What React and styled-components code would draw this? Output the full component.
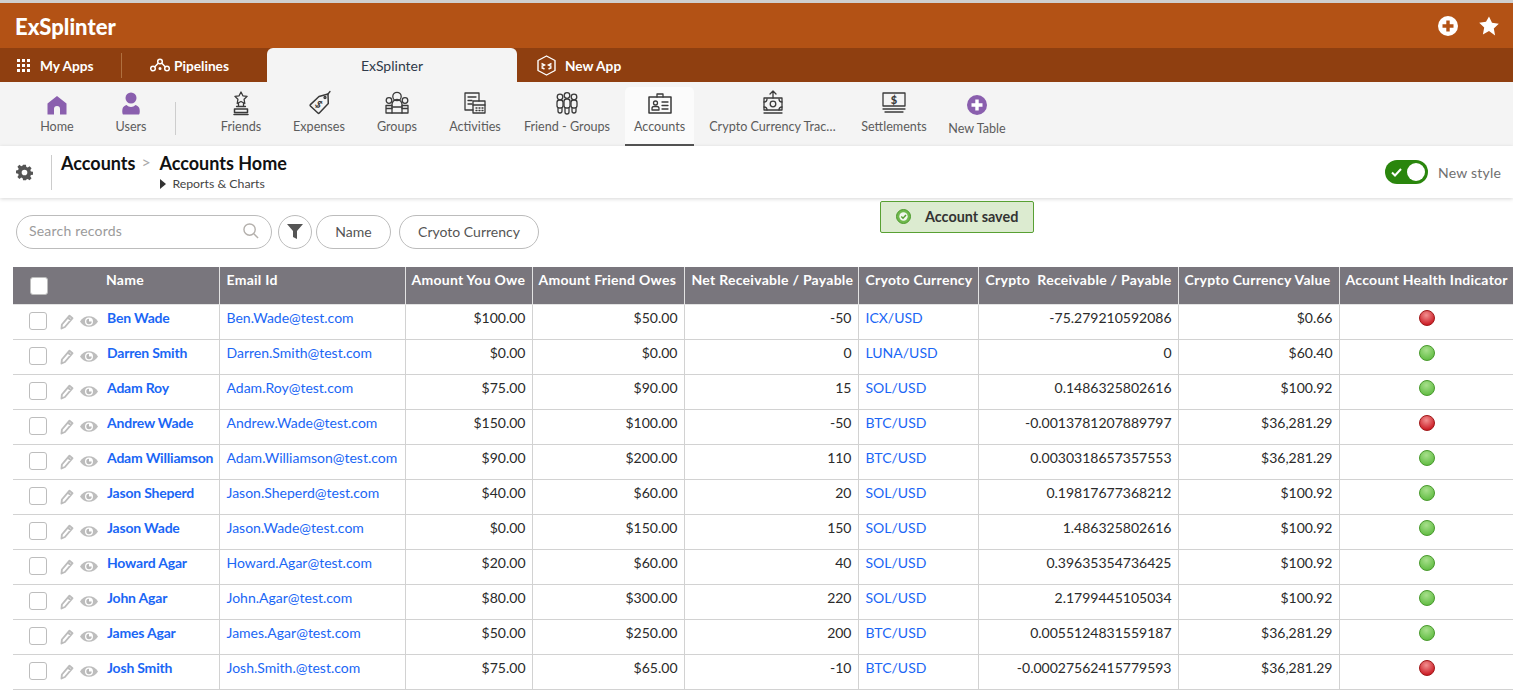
import React from "react"
import styled, { createGlobalStyle } from "styled-components"

const GlobalStyle = createGlobalStyle`
  html, body {
    margin: 0;
    height: 696px;
    overflow: hidden;
    background: #fff;
    font-family: Lato, "Open Sans", sans-serif;
    color: #333;
  }
  * { box-sizing: border-box; }
`

const colors = {
  orange: "#b35215",
  darkOrange: "#8f3f10",
  grey: "#f4f4f4",
  purple: "#8a5fae",
  link: "#1a66f5",
  line: "#d2d2d2",
  head: "#79767d",
}

const Page = styled.div`
  position: relative;
  width: 1513px;
  height: 696px;
  overflow: hidden;
  border-top: 3px solid #cfcfcf;
`

const TopBar = styled.header`
  display: flex;
  align-items: center;
  justify-content: space-between;
  height: 45px;
  padding: 0 14px 0 15px;
  background: ${colors.orange};
`
const Brand = styled.div`
  padding-top: 1px;
  font-size: 22px;
  font-weight: 900;
  color: #fff;
`
const TopActions = styled.div`
  display: flex;
  align-items: center;
  gap: 21px;
`

const AppBar = styled.nav`
  display: flex;
  align-items: stretch;
  height: 34px;
  background: ${colors.darkOrange};
`
const AppLink = styled.a`
  display: flex;
  align-items: center;
  gap: ${(p) => p.$gap || 4}px;
  width: ${(p) => p.$w}px;
  padding-left: ${(p) => p.$pad}px;
  font-size: 13.7px;
  font-weight: 700;
  color: #fff;
`
const AppDivider = styled.span`
  align-self: center;
  width: 1px;
  height: 25px;
  background: #b0703f;
`
const AppTab = styled.a`
  display: flex;
  align-items: center;
  justify-content: center;
  width: 250px;
  border-radius: 6px 6px 0 0;
  background: ${colors.grey};
  font-size: 14px;
  color: #2f3a4a;
`

const TableBar = styled.nav`
  display: flex;
  align-items: stretch;
  height: 64px;
  padding-left: 20px;
  background: ${colors.grey};
`
const TableItem = styled.a`
  position: relative;
  display: flex;
  flex-direction: column;
  align-items: center;
  width: ${(p) => p.$w}px;
  margin-left: ${(p) => p.$ml || 0}px;
  padding-top: ${(p) => p.$pt || 9}px;
  height: 60px;
  font-size: 12.6px;
  color: #5c5c5c;
  white-space: nowrap;
  ${(p) => p.$active && `
    height: 59px;
    margin-top: 5px;
    padding-top: 4px;
    border-radius: 5px 5px 0 0;
    background: #fbfbfb;
    &::after {
      content: "";
      position: absolute;
      left: 0; right: 0; bottom: 0;
      height: 2px;
      background: #555;
    }
  `}
`
const TableIconBox = styled.span`
  display: flex;
  align-items: center;
  justify-content: center;
  height: 24px;
  margin-bottom: 4px;
`
const TableDivider = styled.span`
  align-self: flex-start;
  width: 1px;
  height: 33px;
  margin: 20px 26px 0 7px;
  background: #cdcdcd;
`

const PageHead = styled.div`
  position: relative;
  z-index: 1;
  display: flex;
  align-items: center;
  height: 52px;
  padding: 0 12px 0 16px;
  background: #fff;
  box-shadow: 0 1px 4px rgba(0, 0, 0, 0.16);
`
const HeadGear = styled.span`
  display: flex;
  width: 35px;
`
const HeadDivider = styled.span`
  width: 1px;
  height: 35px;
  margin-right: 9px;
  background: #ccc;
`
const Crumbs = styled.div`
  align-self: flex-start;
  display: flex;
  flex: 1;
  padding-top: 6px;
`
const CrumbRoot = styled.span`
  font-size: 18px;
  font-weight: 700;
  color: #111;
  line-height: 22px;
`
const CrumbArrow = styled.span`
  width: 24px;
  padding-left: 6px;
  font-size: 16px;
  line-height: 20px;
  color: #aaa;
`
const CrumbSub = styled.div`
  display: flex;
  align-items: center;
  gap: 6px;
  margin-top: 2px;
  padding-left: 1px;
  font-size: 12.3px;
  color: #444;
`
const Caret = styled.span`
  width: 0;
  height: 0;
  border-left: 6px solid #333;
  border-top: 5px solid transparent;
  border-bottom: 5px solid transparent;
`
const StyleSwitch = styled.span`
  display: flex;
  align-items: center;
  justify-content: space-between;
  width: 43px;
  height: 24px;
  padding: 0 3px 0 6px;
  border-radius: 12px;
  background: #2a860d;
`
const Knob = styled.span`
  width: 18px;
  height: 18px;
  border-radius: 50%;
  background: #fff;
`
const SwitchLabel = styled.span`
  margin-left: 10px;
  font-size: 14px;
  letter-spacing: 0.2px;
  color: #707070;
`

const Toolbar = styled.div`
  display: flex;
  align-items: center;
  gap: 4px;
  height: 69px;
  padding: 0 0 2px 16px;
`
const SearchBox = styled.div`
  display: flex;
  align-items: center;
  justify-content: space-between;
  width: 256px;
  height: 34px;
  margin-right: 2px;
  padding: 0 12px 2px;
  border: 1px solid #bcbcbc;
  border-radius: 17px;
  font-size: 14px;
  letter-spacing: 0.2px;
  color: #9b9b9b;
`
const FilterButton = styled.span`
  display: flex;
  align-items: center;
  justify-content: center;
  width: 34px;
  height: 34px;
  border: 1px solid #bcbcbc;
  border-radius: 50%;
`
const Pill = styled.span`
  display: flex;
  align-items: center;
  justify-content: center;
  width: ${(p) => p.$w}px;
  margin-left: ${(p) => p.$ml || 0}px;
  height: 34px;
  border: 1px solid #bcbcbc;
  border-radius: 17px;
  font-size: 14px;
  color: #555;
`

const Toast = styled.div`
  position: absolute;
  left: 880px;
  top: 198px;
  z-index: 2;
  display: flex;
  align-items: center;
  width: 154px;
  height: 32px;
  padding: 0 0 2px 15px;
  border: 1px solid #58a033;
  border-radius: 2px;
  background: #dcebd0;
  font-size: 14.4px;
  font-weight: 700;
  color: #333;
`
const ToastText = styled.span`
  margin-left: 14px;
`

const TableWrap = styled.div`
  padding-left: 13px;
`
const Grid = styled.table`
  width: 1560px;
  table-layout: fixed;
  border-collapse: collapse;
  font-size: 14px;
`
const HeadCell = styled.th`
  height: 37px;
  padding: ${(p) => (p.$flush ? "0" : `3px 6px 0 ${p.$pl || 6}px`)};
  vertical-align: top;
  text-align: left;
  font-size: 14px;
  font-weight: 700;
  line-height: 20px;
  letter-spacing: 0.27px;
  white-space: nowrap;
  color: #fff;
  background: ${colors.head};
  border-right: 1px solid #e3e3e3;
  border-bottom: 1px solid #e3e3e3;
`
const Cell = styled.td`
  height: 35px;
  padding: ${(p) => (p.$flush ? "0" : `3px ${p.$pr || 6}px 0 ${p.$pl || 6}px`)};
  vertical-align: top;
  text-align: ${(p) => p.$align || "left"};
  line-height: 20px;
  white-space: nowrap;
  color: #2a2a2a;
  border-right: 1px solid ${colors.line};
  border-bottom: 1px solid ${colors.line};
`
const TotalCell = styled(Cell)`
  border: 0;
`
const NameWrap = styled.div`
  display: flex;
  align-items: flex-start;
  height: 28px;
`
const Check = styled.span`
  flex: none;
  width: 18px;
  height: 18px;
  margin: ${(p) => (p.$head ? "10px 0 0 17px" : "7px 0 0 16px")};
  border: 1px solid #bdbdbd;
  border-radius: 3px;
  background: #fff;
`
const RowIcons = styled.span`
  display: flex;
  align-items: center;
  gap: 6px;
  width: 47px;
  margin: 9px 0 0 13px;
`
const HeadName = styled.span`
  margin: 3px 0 0 58px;
`
const NameLink = styled.a`
  margin-top: 3px;
  font-weight: 700;
  font-size: 14px;
  letter-spacing: -0.2px;
  color: ${colors.link};
`
const BlueLink = styled.a`
  color: ${colors.link};
`
const Ball = styled.span`
  display: inline-block;
  width: 16px;
  height: 16px;
  margin-top: 2px;
  border-radius: 50%;
  border: 1px solid ${(p) => (p.$ok ? "#4a9a2e" : "#a01a1a")};
  background: ${(p) =>
    p.$ok
      ? "radial-gradient(circle at 45% 30%, #a8e08c, #66bf48 75%)"
      : "radial-gradient(circle at 45% 30%, #f29090, #cc1f28 75%)"};
`

const columns = [206, 186, 127, 152, 174, 120, 200, 161, 234]

const rows = [
  ["Ben Wade", "Ben.Wade@test.com", "$100.00", "$50.00", "-50", "ICX/USD", "-75.279210592086", "$0.66", false],
  ["Darren Smith", "Darren.Smith@test.com", "$0.00", "$0.00", "0", "LUNA/USD", "0", "$60.40", true],
  ["Adam Roy", "Adam.Roy@test.com", "$75.00", "$90.00", "15", "SOL/USD", "0.1486325802616", "$100.92", true],
  ["Andrew Wade", "Andrew.Wade@test.com", "$150.00", "$100.00", "-50", "BTC/USD", "-0.0013781207889797", "$36,281.29", false],
  ["Adam Williamson", "Adam.Williamson@test.com", "$90.00", "$200.00", "110", "BTC/USD", "0.0030318657357553", "$36,281.29", true],
  ["Jason Sheperd", "Jason.Sheperd@test.com", "$40.00", "$60.00", "20", "SOL/USD", "0.19817677368212", "$100.92", true],
  ["Jason Wade", "Jason.Wade@test.com", "$0.00", "$150.00", "150", "SOL/USD", "1.486325802616", "$100.92", true],
  ["Howard Agar", "Howard.Agar@test.com", "$20.00", "$60.00", "40", "SOL/USD", "0.39635354736425", "$100.92", true],
  ["John Agar", "John.Agar@test.com", "$80.00", "$300.00", "220", "SOL/USD", "2.1799445105034", "$100.92", true],
  ["James Agar", "James.Agar@test.com", "$50.00", "$250.00", "200", "BTC/USD", "0.0055124831559187", "$36,281.29", true],
  ["Josh Smith", "Josh.Smith.@test.com", "$75.00", "$65.00", "-10", "BTC/USD", "-0.00027562415779593", "$36,281.29", false],
]

const headers = [
  { label: "Email Id", pl: 7 },
  { label: "Amount You Owe" },
  { label: "Amount Friend Owes" },
  { label: "Net Receivable / Payable", pl: 7 },
  { label: "Cryoto Currency", pl: 7 },
  { label: "Crypto\u00a0 Receivable / Payable", pl: 7 },
  { label: "Crypto Currency Value" },
  { label: "Account Health Indicator" },
]

const Line = ({ size = 26, children }) => (
  <svg width={size} height={size} viewBox="0 0 26 26" fill="none" stroke="#3a3a3a" strokeWidth="1.3" strokeLinejoin="round" strokeLinecap="round">
    {children}
  </svg>
)

const PlusCircle = ({ size, bg, fg }) => (
  <svg width={size} height={size} viewBox="0 0 20 20">
    <circle cx="10" cy="10" r="10" fill={bg} />
    <path d="M10 4.500v11M4.500 10h11" stroke={fg} strokeWidth="3.400" />
  </svg>
)

const Star = () => (
  <svg width="20" height="20" viewBox="0 0 20 20">
    <path d="M10 0.500l3 6.300 6.800.9-5 4.800 1.300 6.900L10 15.100l-6.100 3.300 1.300-6.900-5-4.800 6.800-.9z" fill="#fff" />
  </svg>
)

const GridIcon = () => (
  <svg width="13" height="13" viewBox="0 0 13 13" fill="#fff">
    {[0, 5, 10].map((y) =>
      [0, 5, 10].map((x) => <rect key={`${x}-${y}`} x={x} y={y} width="3" height="3" />)
    )}
  </svg>
)

const PipelineIcon = () => (
  <svg width="20" height="14" viewBox="0 0 20 14" fill="none" stroke="#fff" strokeWidth="1.500">
    <circle cx="3" cy="10.500" r="2.300" />
    <circle cx="10" cy="3.500" r="2.300" />
    <circle cx="17" cy="10.500" r="2.300" />
    <circle cx="10" cy="10.500" r="0.800" />
    <path d="M4.600 9l3.800-4M11.600 5l3.800 4" />
  </svg>
)

const NewAppIcon = () => (
  <svg width="19" height="21" viewBox="0 0 19 21" fill="none" stroke="#fff" strokeWidth="1.400">
    <path d="M9.500 1l8.500 4.500v10L9.500 20 1 15.500v-10z" strokeLinejoin="round" />
    <path d="M4.500 8.500l3 1.500-3 1.500M4.500 12.500l3 1.500M14.500 8.500l-3 1.500 3 1.500M14.500 12.500l-3 1.500" />
  </svg>
)

const HomeIcon = () => (
  <svg width="20" height="24" viewBox="0 -4 20 24" fill={colors.purple}>
    <path d="M10 1L0.500 8.500v11h6.500V14a3 3 0 0 1 6 0v5.500h6.500v-11z" />
  </svg>
)

const UserIcon = () => (
  <svg width="18" height="23" viewBox="0 0 18 23" fill={colors.purple}>
    <circle cx="9" cy="6" r="5.500" />
    <path d="M1 22.500c-1-1-1-5 0-7 1-1.500 3-2.500 3.500-2.500 2.500 2.500 6.500 2.500 9 0 .5 0 2.500 1 3.500 2.500 1 2 1 6 0 7z" />
  </svg>
)

const TrophyIcon = () => (
  <Line>
    <path d="M13 2l1.900 3.800 4.200.6-3 2.900.7 4.200-3.800-2-3.800 2 .7-4.200-3-2.900 4.200-.6z" />
    <path d="M10.500 13.500v3M15.500 13.500v3M8.500 16.500h9" />
    <path d="M6.500 19h13v3.500h-13zM6 24.500h14" strokeWidth="1.500" />
  </Line>
)

const TagIcon = () => (
  <Line>
    <path d="M22 4l2-2.500" />
    <path d="M13 6.500l9-2.500.3 9.500-9 9.500a1 1 0 0 1-1.400 0l-7.500-7a1 1 0 0 1 0-1.400z" strokeWidth="1.500" />
    <circle cx="19" cy="7.500" r="1" />
    <text x="13" y="18" fontSize="10" fontWeight="700" textAnchor="middle" fill="#3a3a3a" stroke="none" fontFamily="Lato" transform="rotate(40 13 14)">$</text>
  </Line>
)

const GroupIcon = () => (
  <Line>
    <circle cx="13" cy="6.500" r="4.200" />
    <circle cx="5" cy="10.500" r="2.800" />
    <circle cx="21" cy="10.500" r="2.800" />
    <path d="M8 15.500v-1a5 5 0 0 1 10 0v1M8 23v-9M18 23v-9" />
    <path d="M2 23v-7.500h6M24 23v-7.500h-6M2 18.500h6M18 18.500h6M2 23h22M8 17h10" />
  </Line>
)

const ActivitiesIcon = () => (
  <Line>
    <path d="M11 20H3V3h14v8" />
    <path d="M6 7h8M6 10.500h4M6 14h4" />
    <path d="M11 11h12v12H11z" />
    <path d="M11 15h12" />
    <path d="M14 18h1M17 18h1M20 18h1M14 20.500h1M17 20.500h1M20 20.500h1" />
  </Line>
)

const FriendGroupIcon = () => (
  <Line>
    <circle cx="13" cy="5.500" r="2.800" />
    <circle cx="6" cy="7" r="2.800" />
    <circle cx="20" cy="7" r="2.800" />
    <rect x="3" y="10" width="6" height="8" rx="2.500" />
    <rect x="10" y="9" width="6" height="9" rx="2.500" />
    <rect x="17" y="10" width="6" height="8" rx="2.500" />
    <path d="M4 18v3a2 2 0 0 0 4 0v-3M11 18v4a2 2 0 0 0 4 0v-4M18 18v3a2 2 0 0 0 4 0v-3" />
  </Line>
)

const BadgeIcon = () => (
  <Line>
    <path d="M2 7h22v16H2z" strokeWidth="1.500" />
    <path d="M10 7V4h6v3" />
    <circle cx="8.500" cy="13" r="2" />
    <path d="M5 20v-1.500a2 2 0 0 1 2-2h3a2 2 0 0 1 2 2V20zM15 12h6M15 15.500h6M15 19h6" />
  </Line>
)

const CashIcon = () => (
  <Line>
    <path d="M13 1v7M10 4l3-3 3 3" />
    <path d="M4 8h18v12H4zM4 23h18" />
    <circle cx="13" cy="14" r="2.800" />
    <path d="M4 12a3 3 0 0 0 3-3M22 12a3 3 0 0 1-3-3M4 17a3 3 0 0 1 3 3M22 17a3 3 0 0 0-3 3" />
  </Line>
)

const LaptopIcon = () => (
  <Line>
    <path d="M2 3h22v13H2zM2 19h22M4 22h18" />
    <text x="13" y="13.500" fontSize="11" fontWeight="900" textAnchor="middle" fill="#3a3a3a" stroke="none" fontFamily="Lato">$</text>
  </Line>
)

const GearIcon = () => (
  <svg width="17" height="17" viewBox="0 0 24 24" fill="#555">
    <path fillRule="evenodd" d="M10 1h4l.6 3.100 2 .8 2.600-1.800 2.800 2.800-1.800 2.600.8 2 3 .5v4l-3 .6-.8 2 1.800 2.600-2.800 2.800-2.600-1.800-2 .8L14 23h-4l-.6-3-2-.8-2.600 1.800L2 18.200 3.800 15.600l-.8-2L0 13.100v-4l3-.5.8-2L2 4l2.800-2.800 2.600 1.800 2-.8zM12 8a4 4 0 1 0 0 8 4 4 0 0 0 0-8z" />
  </svg>
)

const SearchIcon = () => (
  <svg width="16" height="16" viewBox="0 0 17 17" fill="none" stroke="#b4b0ac" strokeWidth="1.500">
    <circle cx="7" cy="7" r="6" />
    <path d="M11.500 11.500L16 16" />
  </svg>
)

const FunnelIcon = () => (
  <svg width="16" height="15" viewBox="0 0 16 15" fill="#555">
    <path d="M0 0h16l-6 7v8l-4-2V7z" />
  </svg>
)

const Pencil = () => (
  <svg width="14" height="16" viewBox="0 0 14 16" fill="none" stroke="#bcbcbc" strokeWidth="1.900">
    <path d="M1.500 14.500l.4-4L9.500 1.700l3 2.500-7.600 8.800zM8 3.700l3 2.500" strokeLinejoin="round" />
  </svg>
)

const Eye = () => (
  <svg width="18" height="13" viewBox="0 0 18 13">
    <path d="M0 6.500C4 -0.500 14 -0.500 18 6.500 14 13.500 4 13.500 0 6.500z" fill="#bdbdbd" />
    <circle cx="9" cy="6.500" r="4" fill="#fff" />
    <path d="M9 3.800a2.700 2.700 0 1 0 2.700 2.700H9z" fill="#b8b8b8" />
  </svg>
)

const CheckMark = () => (
  <svg width="11" height="9" viewBox="0 0 11 9" fill="none" stroke="#fff" strokeWidth="2">
    <path d="M1 4.500l3 3 6-6.500" />
  </svg>
)

const SavedIcon = () => (
  <svg width="15" height="15" viewBox="0 0 15 15">
    <circle cx="7.500" cy="7.500" r="7" fill="#6fb84d" stroke="#4c9a2c" />
    <circle cx="7.500" cy="7.500" r="4.200" fill="#f2f8ee" />
    <path d="M5.300 7.500l1.700 1.700 3-3.200" fill="none" stroke="#58a033" strokeWidth="1.500" />
  </svg>
)

const tables = [
  { label: "Friends", w: 78, icon: <TrophyIcon /> },
  { label: "Expenses", w: 78, icon: <TagIcon /> },
  { label: "Groups", w: 78, icon: <GroupIcon /> },
  { label: "Activities", w: 78, icon: <ActivitiesIcon /> },
  { label: "Friend - Groups", w: 106, icon: <FriendGroupIcon /> },
  { label: "Accounts", w: 69, ml: 5, active: true, icon: <BadgeIcon /> },
  { label: "Crypto Currency Trac…", w: 147, ml: 5, icon: <CashIcon /> },
  { label: "Settlements", w: 96, icon: <LaptopIcon /> },
  { label: "New Table", w: 70, pt: 11, icon: <PlusCircle size={20} bg={colors.purple} fg="#fff" /> },
]

export default function App() {
  return (
    <Page>
      <GlobalStyle />
      <TopBar>
        <Brand>ExSplinter</Brand>
        <TopActions>
          <PlusCircle size={20} bg="#fff" fg={colors.orange} />
          <Star />
        </TopActions>
      </TopBar>

      <AppBar>
        <AppLink $w={121} $pad={17} $gap={10}><GridIcon />My Apps</AppLink>
        <AppDivider />
        <AppLink $w={145} $pad={28}><PipelineIcon />Pipelines</AppLink>
        <AppTab>ExSplinter</AppTab>
        <AppLink $w={140} $pad={20} $gap={9}><NewAppIcon />New App</AppLink>
      </AppBar>

      <TableBar>
        <TableItem $w={74}><TableIconBox><HomeIcon /></TableIconBox>Home</TableItem>
        <TableItem $w={74}><TableIconBox><UserIcon /></TableIconBox>Users</TableItem>
        <TableDivider />
        {tables.map((t) => (
          <TableItem key={t.label} $w={t.w} $ml={t.ml} $pt={t.pt} $active={t.active}>
            <TableIconBox>{t.icon}</TableIconBox>
            {t.label}
          </TableItem>
        ))}
      </TableBar>

      <PageHead>
        <HeadGear><GearIcon /></HeadGear>
        <HeadDivider />
        <Crumbs>
          <CrumbRoot>Accounts</CrumbRoot>
          <CrumbArrow>&gt;</CrumbArrow>
          <div>
            <CrumbRoot>Accounts Home</CrumbRoot>
            <CrumbSub><Caret />Reports &amp; Charts</CrumbSub>
          </div>
        </Crumbs>
        <StyleSwitch><CheckMark /><Knob /></StyleSwitch>
        <SwitchLabel>New style</SwitchLabel>
      </PageHead>

      <Toast><SavedIcon /><ToastText>Account saved</ToastText></Toast>

      <Toolbar>
        <SearchBox>Search records<SearchIcon /></SearchBox>
        <FilterButton><FunnelIcon /></FilterButton>
        <Pill $w={75}>Name</Pill>
        <Pill $w={140} $ml={4}>Cryoto Currency</Pill>
      </Toolbar>

      <TableWrap>
        <Grid>
          <colgroup>
            {columns.map((w, i) => <col key={i} width={w} />)}
          </colgroup>
          <thead>
            <tr>
              <HeadCell $flush>
                <NameWrap>
                  <Check $head />
                  <HeadName>Name</HeadName>
                </NameWrap>
              </HeadCell>
              {headers.map((h) => <HeadCell key={h.label} $pl={h.pl}>{h.label}</HeadCell>)}
            </tr>
          </thead>
          <tbody>
            {rows.map((r) => (
              <tr key={r[0]}>
                <Cell $flush>
                  <NameWrap>
                    <Check />
                    <RowIcons><Pencil /><Eye /></RowIcons>
                    <NameLink>{r[0]}</NameLink>
                  </NameWrap>
                </Cell>
                <Cell $pl={7}><BlueLink>{r[1]}</BlueLink></Cell>
                <Cell $align="right">{r[2]}</Cell>
                <Cell $align="right">{r[3]}</Cell>
                <Cell $align="right">{r[4]}</Cell>
                <Cell $pl={7}><BlueLink>{r[5]}</BlueLink></Cell>
                <Cell $align="right">{r[6]}</Cell>
                <Cell $align="right">{r[7]}</Cell>
                <Cell $align="center" $pr={65}><Ball $ok={r[8]} /></Cell>
              </tr>
            ))}
            <tr>
              <TotalCell />
              <TotalCell />
              <TotalCell $align="right">$680.00</TotalCell>
              <TotalCell $align="right">$1,325.00</TotalCell>
              <TotalCell $align="right">645</TotalCell>
              <TotalCell />
              <TotalCell $align="right">-70.862886773714</TotalCell>
              <TotalCell $align="right">$145,690.82</TotalCell>
              <TotalCell />
            </tr>
          </tbody>
        </Grid>
      </TableWrap>
    </Page>
  )
}
